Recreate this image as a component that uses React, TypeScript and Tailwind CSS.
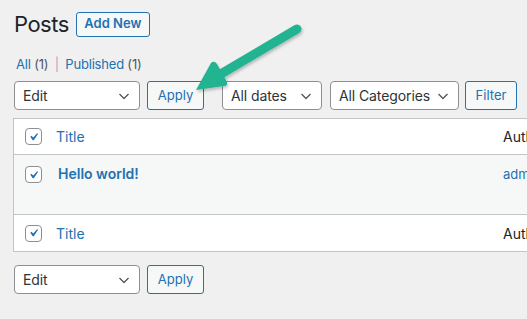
import React from "react";

const Chevron = () => (
  <svg width="16" height="16" viewBox="0 0 16 16" className="shrink-0">
    <path d="M3.5 6l4.5 4.5L12.5 6" fill="none" stroke="#50575e" strokeWidth="1.3" />
  </svg>
);

const Select = ({ label, w }: { label: string; w: string }) => (
  <div className={`${w} h-[29px] bg-white border border-[#8c8f94] rounded-[4px] flex items-center justify-between pl-[8px] pr-[7px] text-[14px] text-[#2c3338] tracking-[-0.1px]`}>
    <span>{label}</span>
    <Chevron />
  </div>
);

const Btn = ({ label, w }: { label: string; w: string }) => (
  <div className={`${w} h-[29px] bg-[#f6f7f7] border border-[#2271b1] rounded-[3px] flex items-center justify-center text-[13px] text-[#2271b1]`}>
    {label}
  </div>
);

const Check = () => (
  <div className="w-[17px] h-[17px] border border-[#8c8f94] rounded-[4px] bg-white flex items-center justify-center shrink-0">
    <svg width="18" height="18" viewBox="0 0 20 20">
      <path d="M14.83 4.89l1.34.94-5.81 8.38H9.02L5.78 9.67l1.34-1.25 2.57 2.4z" fill="#2271b1" />
    </svg>
  </div>
);

export default function App() {
  return (
    <div className="relative w-[527px] h-[319px] overflow-hidden bg-[#f0f0f1]" style={{ fontFamily: "Inter, 'Noto Sans', sans-serif" }}>
      <div className="pl-[14px] pt-[9px]">
        <div className="flex items-center gap-[7px]">
          <span className="text-[22px] text-[#1d2327] leading-[30px] tracking-[-0.5px]">Posts</span>
          <div className="h-[25px] w-[74px] border border-[#2271b1] rounded-[3px] bg-[#f6f7f7] flex items-center justify-center text-[13px] font-semibold text-[#2271b1]">
            Add New
          </div>
        </div>
        <div className="mt-[17px] pl-[2px] text-[13px] leading-[16px] text-[#50575e] tracking-[-0.2px]">
          <span className="text-[#2271b1]">All</span> (1) <span className="text-[#a7aaad] mx-[3px]">|</span>{" "}
          <span className="text-[#2271b1]">Published</span> (1)
        </div>
        <div className="mt-[9px] flex items-center">
          <Select label="Edit" w="w-[126px]" />
          <div className="ml-[7px]"><Btn label="Apply" w="w-[57px]" /></div>
          <div className="ml-[18px]"><Select label="All dates" w="w-[100px]" /></div>
          <div className="ml-[8px]"><Select label="All Categories" w="w-[129px]" /></div>
          <div className="ml-[6px]"><Btn label="Filter" w="w-[52px]" /></div>
        </div>
      </div>
      <div className="ml-[13px] mt-[8px] w-[540px] border border-[#c3c4c7] bg-white">
        <div className="h-[36px] flex items-center border-b border-[#c3c4c7] pl-[11px]">
          <Check />
          <span className="ml-[14px] text-[14px] text-[#2271b1]">Title</span>
          <span className="absolute left-[503px] text-[14px] text-[#1d2327] whitespace-nowrap">Author</span>
        </div>
        <div className="relative h-[60px] bg-[#f6f7f7] border-b border-[#c3c4c7] flex items-start pl-[11px] pt-[11px]">
          <Check />
          <span className="ml-[16px] text-[14px] font-semibold text-[#2271b1] leading-[16px]">Hello world!</span>
          <span className="absolute left-[489px] top-[11px] text-[13px] text-[#2271b1] leading-[16px] whitespace-nowrap">admin</span>
        </div>
        <div className="h-[36px] flex items-center pl-[11px]">
          <Check />
          <span className="ml-[14px] text-[14px] text-[#2271b1]">Title</span>
          <span className="absolute left-[503px] text-[14px] text-[#1d2327] whitespace-nowrap">Author</span>
        </div>
      </div>
      <div className="pl-[14px] mt-[13px] flex items-center">
        <Select label="Edit" w="w-[126px]" />
        <div className="ml-[7px]"><Btn label="Apply" w="w-[57px]" /></div>
      </div>
      <svg className="absolute left-0 top-0 pointer-events-none" width="527" height="319" viewBox="0 0 527 319">
        <defs>
          <filter id="sh" x="-20%" y="-20%" width="140%" height="140%">
            <feDropShadow dx="1" dy="2" stdDeviation="1.5" floodColor="#000" floodOpacity="0.25" />
          </filter>
        </defs>
        <g filter="url(#sh)">
          <line x1="297" y1="29" x2="214" y2="78" stroke="#20b391" strokeWidth="9" strokeLinecap="round" />
          <path d="M196 90 L211 63 Q214 60 217 64 L227 82 Q228 86 224 86 Z" fill="#20b391" />
        </g>
      </svg>
    </div>
  );
}
